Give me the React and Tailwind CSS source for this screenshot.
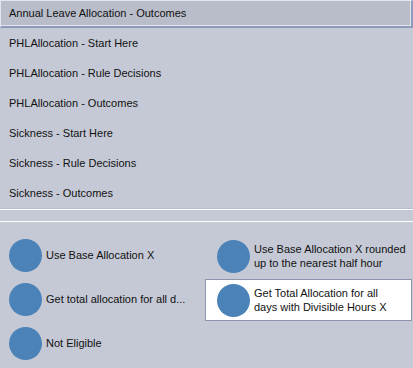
export default function App() {
  const rows = [
    'PHLAllocation - Start Here',
    'PHLAllocation - Rule Decisions',
    'PHLAllocation - Outcomes',
    'Sickness - Start Here',
    'Sickness - Rule Decisions',
    'Sickness - Outcomes',
  ];

  const Dot = () => <div className="w-[33px] h-[33px] shrink-0 rounded-full bg-[#4b83b9]" />;

  return (
    <div
      className="w-[413px] h-[368px] overflow-hidden bg-[#c5c9d5] text-[11px] text-[#111]"
      style={{ fontFamily: '"Liberation Sans", Arial, sans-serif' }}
    >
      {/* rule list */}
      <div className="h-[28px] flex items-center pl-[8px] bg-[#b9bdc9] border-t border-l border-[#e2e5ec] border-b-2 border-r-2 border-b-[#8f9aba] border-r-[#8f9aba] shadow-[inset_-1px_-1px_0_#e2e5ec]">
        Annual Leave Allocation - Outcomes
      </div>
      {rows.map((r) => (
        <div key={r} className="h-[30px] flex items-center pl-[9px]">
          {r}
        </div>
      ))}
      <div className="h-px bg-[#b6bcd2]" />
      <div className="h-px bg-white" />
      <div className="h-[11px]" />
      <div className="h-px bg-white" />

      {/* outcome buttons */}
      <div className="grid grid-cols-[205px_207px] pt-[11px]">
        <div className="h-[44px] flex items-center gap-[4px] pl-[9px]">
          <Dot />
          <span>Use Base Allocation X</span>
        </div>
        <div className="h-[44px] pt-[2px]">
          <div className="h-[42px] flex items-center gap-[4px] pl-[11px] border border-transparent">
            <Dot />
            <span className="leading-[14px] whitespace-nowrap">
              <span className="block">Use Base Allocation X rounded</span>
              <span className="block">up to the nearest half hour</span>
            </span>
          </div>
        </div>
        <div className="h-[44px] flex items-center gap-[4px] pl-[9px]">
          <Dot />
          <span className="whitespace-nowrap">Get total allocation for all d...</span>
        </div>
        <div className="h-[44px] pt-[2px]">
          <div className="h-[42px] flex items-center gap-[4px] pl-[11px] bg-white border border-[#8d95ad]">
            <Dot />
            <span className="leading-[14px] whitespace-nowrap">
              <span className="block">Get Total Allocation for all</span>
              <span className="block">days with Divisible Hours X</span>
            </span>
          </div>
        </div>
        <div className="h-[44px] flex items-center gap-[4px] pl-[9px]">
          <Dot />
          <span>Not Eligible</span>
        </div>
      </div>
    </div>
  );
}
